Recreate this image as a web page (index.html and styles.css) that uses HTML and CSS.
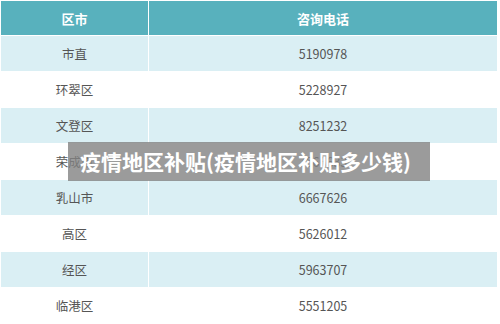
FILE: index.html
```html
<!DOCTYPE html>
<html lang="zh-CN">

<head>
    <meta charset="UTF-8">
    <meta name="viewport" content="width=device-width, initial-scale=1.0">
    <title>疫情地区补贴</title>
    <link rel="stylesheet" href="styles.css">
</head>

<body>
    <div class="page">
        <table class="phones">
            <thead>
                <tr>
                    <th class="col-area">区市</th>
                    <th>咨询电话</th>
                </tr>
            </thead>
            <tbody>
                <tr><td>市直</td><td>5190978</td></tr>
                <tr><td>环翠区</td><td>5228927</td></tr>
                <tr><td>文登区</td><td>8251232</td></tr>
                <tr><td>荣成市</td><td>7566633</td></tr>
                <tr><td>乳山市</td><td>6667626</td></tr>
                <tr><td>高区</td><td>5626012</td></tr>
                <tr><td>经区</td><td>5963707</td></tr>
                <tr><td>临港区</td><td>5551205</td></tr>
            </tbody>
        </table>

        <div class="caption">疫情地区补贴(疫情地区补贴多少钱)</div>
    </div>
</body>

</html>
```
FILE: styles.css
```css
body {
    margin: 0;
    background: #fff;
    font-family: "Noto Sans CJK SC", "Noto Sans", sans-serif;
}

.page {
    position: relative;
    width: 500px;
    height: 324px;
    overflow: hidden;
    padding: 1px 3px 0 1px;
    box-sizing: border-box;
}

.phones {
    width: 496px;
    border-collapse: collapse;
    table-layout: fixed;
}

.phones th,
.phones td {
    height: 35px;
    padding: 0;
    text-align: center;
    border-right: 1px solid #fff;
    border-bottom: 1px solid #fff;
}

.phones th:last-child,
.phones td:last-child {
    border-right: none;
}

.phones .col-area {
    width: 147px;
}

.phones th {
    height: 34px;
    background: #58b1bd;
    color: #fff;
    font-size: 13px;
    font-weight: bold;
}

.phones td {
    color: #555;
    font-size: 12.5px;
}

.phones tbody tr:nth-child(odd) td {
    background: #daeff4;
}

.caption {
    position: absolute;
    left: 68px;
    top: 142px;
    width: 362px;
    height: 39px;
    box-sizing: border-box;
    padding-left: 12px;
    background: rgba(130, 130, 130, 0.8);
    color: #fff;
    font-size: 21px;
    font-weight: bold;
    line-height: 39px;
    white-space: nowrap;
}
```
